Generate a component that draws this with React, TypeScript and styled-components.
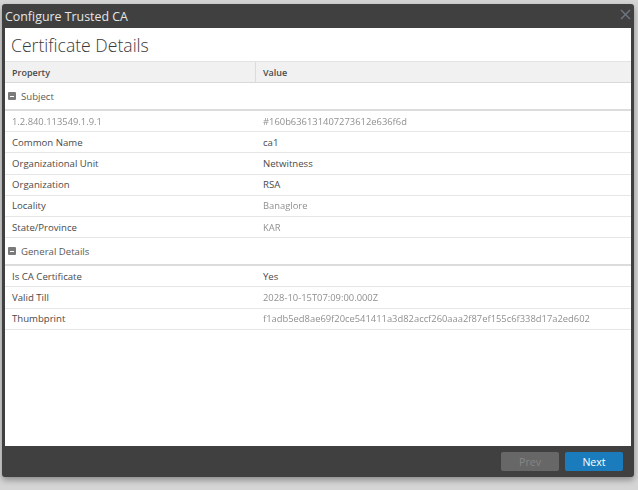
import React from 'react'
import styled, { createGlobalStyle } from 'styled-components'

const GlobalStyle = createGlobalStyle`
  html, body {
    margin: 0;
    padding: 0;
    background: #d5d5d5;
    font-family: "Open Sans", "Liberation Sans", sans-serif;
  }
`

const Page = styled.div`
  width: 638px;
  height: 490px;
  padding: 4px 0 0 2px;
  box-sizing: border-box;
`

const Dialog = styled.div`
  width: 632px;
  height: 473px;
  background: #404040;
  border-radius: 3px;
  box-shadow: 0 3px 6px rgba(0, 0, 0, 0.35);
  display: flex;
  flex-direction: column;
`

const TitleBar = styled.div`
  height: 24px;
  display: flex;
  align-items: center;
  justify-content: space-between;
  padding: 0 3px 0 3px;
  color: #e6e6e6;
  font-size: 12.4px;
`

const Close = styled.span`
  display: flex;
  color: #6e7780;
  margin-top: -4px;
`

const Body = styled.div`
  flex: 1;
  margin: 0 3px 0 3px;
  background: #fff;
  display: flex;
  flex-direction: column;
`

const Heading = styled.div`
  height: 33px;
  display: flex;
  align-items: center;
  padding-left: 6px;
  font-size: 17.6px;
  font-weight: 300;
  color: #3a3a3a;
`

const Row = styled.div<{ $kind?: 'head' | 'group' | 'data' }>`
  display: grid;
  grid-template-columns: 251px 1fr;
  box-sizing: border-box;
  height: ${(p) => (p.$kind === 'group' ? '28px' : p.$kind === 'head' ? '22px' : '21.2px')};
  background: ${(p) => (p.$kind === 'head' ? '#f1f1f1' : '#fff')};
  border-top: ${(p) => (p.$kind === 'head' ? '1px solid #e3e3e3' : 'none')};
  border-bottom: ${(p) =>
    p.$kind === 'group' ? '2px solid #dcdcdc' : p.$kind === 'head' ? '1px solid #d9d9d9' : '1px solid #e6e6e6'};
  font-size: ${(p) => (p.$kind === 'head' ? '9px' : '9.6px')};
  font-weight: ${(p) => (p.$kind === 'head' ? 600 : 400)};
  color: ${(p) => (p.$kind === 'group' ? '#5a5a5a' : '#4a4a4a')};
`

const Cell = styled.div<{ $divider?: boolean; $blur?: boolean }>`
  display: flex;
  align-items: center;
  padding-left: 7px;
  white-space: nowrap;
  overflow: hidden;
  border-right: ${(p) => (p.$divider ? '1px solid #dcdcdc' : 'none')};
  color: ${(p) => (p.$blur ? '#909090' : 'inherit')};
  filter: ${(p) => (p.$blur ? 'blur(0.6px)' : 'none')};
  font-size: ${(p) => (p.$blur ? '9.4px' : 'inherit')};
`

const GroupCell = styled.div`
  grid-column: 1 / span 2;
  display: flex;
  align-items: center;
  gap: 5px;
  padding-left: 3px;
`

const Minus = styled.span`
  width: 8px;
  height: 8px;
  background: #7a7a7a;
  border-radius: 1px;
  position: relative;
  &::after {
    content: '';
    position: absolute;
    left: 2px;
    right: 2px;
    top: 3.5px;
    height: 1px;
    background: #fff;
  }
`

const Footer = styled.div`
  height: 31px;
  display: flex;
  align-items: center;
  justify-content: flex-end;
  gap: 6px;
  padding-right: 11px;
`

const Button = styled.button<{ $primary?: boolean }>`
  width: 58px;
  height: 19px;
  border: none;
  border-radius: 2px;
  font-family: inherit;
  font-size: 10.6px;
  padding: 0;
  background: ${(p) => (p.$primary ? '#1a7cbd' : '#676767')};
  color: ${(p) => (p.$primary ? '#fff' : '#858585')};
`

type Item = { label: string; value: string; blur?: boolean; labelBlur?: boolean }

const subject: Item[] = [
  { label: '1.2.840.113549.1.9.1', value: '#160b636131407273612e636f6d', blur: true, labelBlur: true },
  { label: 'Common Name', value: 'ca1' },
  { label: 'Organizational Unit', value: 'Netwitness' },
  { label: 'Organization', value: 'RSA' },
  { label: 'Locality', value: 'Banaglore', blur: true },
  { label: 'State/Province', value: 'KAR', blur: true },
]

const general: Item[] = [
  { label: 'Is CA Certificate', value: 'Yes' },
  { label: 'Valid Till', value: '2028-10-15T07:09:00.000Z', blur: true },
  { label: 'Thumbprint', value: 'f1adb5ed8ae69f20ce541411a3d82accf260aaa2f87ef155c6f338d17a2ed602', blur: true },
]

const Group: React.FC<{ title: string; items: Item[] }> = ({ title, items }) => (
  <>
    <Row $kind="group">
      <GroupCell>
        <Minus />
        {title}
      </GroupCell>
    </Row>
    {items.map((it) => (
      <Row $kind="data" key={it.label}>
        <Cell $blur={it.labelBlur}>{it.label}</Cell>
        <Cell $blur={it.blur}>{it.value}</Cell>
      </Row>
    ))}
  </>
)

export default function App() {
  return (
    <Page>
      <GlobalStyle />
      <Dialog>
        <TitleBar>
          Configure Trusted CA
          <Close>
            <svg width="11" height="11" viewBox="0 0 11 11">
              <path d="M1 1L10 10M10 1L1 10" stroke="currentColor" strokeWidth="1.4" />
            </svg>
          </Close>
        </TitleBar>
        <Body>
          <Heading>Certificate Details</Heading>
          <Row $kind="head">
            <Cell $divider>Property</Cell>
            <Cell>Value</Cell>
          </Row>
          <Group title="Subject" items={subject} />
          <Group title="General Details" items={general} />
        </Body>
        <Footer>
          <Button disabled>Prev</Button>
          <Button $primary>Next</Button>
        </Footer>
      </Dialog>
    </Page>
  )
}
